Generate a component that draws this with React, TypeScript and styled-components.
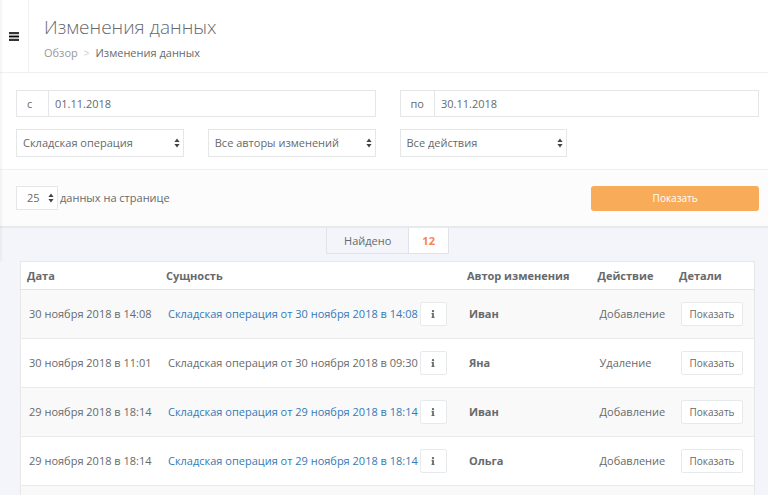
import React from "react";
import styled, { createGlobalStyle } from "styled-components";
import { FaInfo } from "react-icons/fa";

const GlobalStyle = createGlobalStyle`
  *, *::before, *::after { box-sizing: border-box; }
  body {
    margin: 0;
    background: #f3f5fa;
    color: #676a6c;
    font: 11px/16px "Open Sans", "Noto Sans", sans-serif;
  }
  button, input, select { font: inherit; color: inherit; }
`;

const Shell = styled.div`
  height: 100vh;
  overflow: hidden;
`;

const Upper = styled.div`
  position: relative;
  &::before {
    content: "";
    position: absolute;
    inset: 0 auto 0 0;
    width: 3px;
    background: linear-gradient(to right, rgba(0, 0, 0, 0.05), transparent);
    pointer-events: none;
  }
`;

const Header = styled.header`
  display: flex;
  height: 73px;
  background: #fff;
  border-bottom: 1px solid #f0f0f0;
`;

const MenuButton = styled.button`
  display: flex;
  align-items: center;
  justify-content: center;
  width: 29px;
  padding: 0;
  border: 0;
  border-right: 1px solid #f0f0f0;
  background: none;
  color: #000;
`;

const Heading = styled.div`
  padding: 13px 15px 0;
`;

const Title = styled.h1`
  margin: 0;
  font-size: 19px;
  line-height: 28px;
  font-weight: 300;
`;

const Crumbs = styled.nav`
  display: flex;
  gap: 6px;
  margin-top: 4px;
`;

const CrumbLink = styled.a`
  color: #999;
  text-decoration: none;
`;

const CrumbSeparator = styled.span`
  color: #ccc;
  font-size: 10px;
`;

const FilterGrid = styled.div`
  display: grid;
  grid-template-columns: repeat(4, 1fr);
  gap: 12px 24px;
  padding: 17px 9px 12px 16px;
  background: #fff;
`;

const DateField = styled.label`
  grid-column: span 2;
  display: flex;
  height: 27px;
  border: 1px solid #e5e6e7;
`;

const DateLabel = styled.span`
  display: flex;
  align-items: center;
  padding: 0 10px;
  min-width: 32px;
  border-right: 1px solid #e5e6e7;
`;

const DateInput = styled.input`
  flex: 1;
  min-width: 0;
  padding: 0 6px;
  border: 0;
  background: none;
`;

const SelectBox = styled.div<{ $compact?: boolean }>`
  position: relative;
  width: ${(p) => (p.$compact ? "42px" : "100%")};
  height: ${(p) => (p.$compact ? "24px" : "28px")};

  select {
    appearance: none;
    width: 100%;
    height: 100%;
    padding: 0 ${(p) => (p.$compact ? "10px" : "6px")};
    border: 1px solid #e5e6e7;
    border-radius: 0;
    background: #fff;
  }

  svg {
    position: absolute;
    top: calc(50% - 5px);
    right: 4px;
    pointer-events: none;
  }
`;

const ActionBar = styled.div`
  display: flex;
  align-items: center;
  justify-content: space-between;
  height: 59px;
  padding: 0 9px 0 16px;
  background: #fcfcfc;
  border-top: 1px solid #f0f0f0;
  border-bottom: 2px solid #e7eaec;
`;

const PageSize = styled.label`
  display: flex;
  align-items: center;
  gap: 2px;
`;

const SubmitButton = styled.button`
  width: calc((100% - 72px) / 4);
  height: 25px;
  border: 0;
  border-radius: 3px;
  background: #f8ac59;
  color: #fff;
  font-size: 10px;
`;

const Found = styled.div`
  display: flex;
  justify-content: center;
  padding: 0 0 7px 7px;
`;

const FoundPart = styled.span<{ $count?: boolean }>`
  height: 26px;
  padding: 0 ${(p) => (p.$count ? "13px" : "17px")};
  border: 1px solid #dfe4ea;
  border-top: 0;
  border-left-width: ${(p) => (p.$count ? "0" : "1px")};
  background: ${(p) => (p.$count ? "#fff" : "transparent")};
  color: ${(p) => (p.$count ? "#f8864a" : "inherit")};
  font-weight: ${(p) => (p.$count ? 700 : 400)};
  line-height: 26px;
`;

const TableWrap = styled.main`
  padding: 0 13px 0 20px;
`;

const Table = styled.table`
  width: 100%;
  border-collapse: collapse;
  table-layout: fixed;
  background: #fff;
  border: 1px solid #e7e7e7;
`;

const HeadCell = styled.th<{ $width: string }>`
  width: ${(p) => p.$width};
  height: 28px;
  padding: 0 6px;
  border-bottom: 1px solid #e2e3e4;
  text-align: left;
  font-weight: 700;
`;

const Row = styled.tr`
  height: 49px;
  border-bottom: 1px solid #e9eaeb;
  &:nth-child(odd) { background: #f9f9f9; }
`;

const Cell = styled.td<{ $strong?: boolean }>`
  padding: 0 0 0 8px;
  white-space: nowrap;
  font-weight: ${(p) => (p.$strong ? 700 : 400)};
`;

const Entity = styled.div`
  display: flex;
  align-items: center;
  gap: 2px;
`;

const EntityLink = styled.a`
  color: #337ab7;
  text-decoration: none;
`;

const SmallButton = styled.button<{ $icon?: boolean }>`
  display: flex;
  align-items: center;
  justify-content: center;
  width: ${(p) => (p.$icon ? "27px" : "62px")};
  height: 24px;
  padding: 0;
  border: 1px solid #e7eaec;
  border-radius: 2px;
  background: #fff;
  font-size: 10px;
`;

const Arrows = () => (
  <svg width="6" height="10" viewBox="0 0 6 10" fill="#444" aria-hidden="true">
    <path d="M3 0.5L5.6 4H0.4zM0.4 6H5.6L3 9.5z" />
  </svg>
);

const MenuIcon = () => (
  <svg width="10" height="9" viewBox="0 0 10 9" aria-hidden="true">
    <path d="M0 0H10V9H0z" fill="#ccc" />
    <path d="M0 0.2H10V1.8H0zM0 3.7H10V5.3H0zM0 7.2H10V8.8H0z" fill="#000" />
  </svg>
);

type SelectProps = { label?: string; option: string; compact?: boolean };

const Select = ({ label, option, compact }: SelectProps) => (
  <SelectBox $compact={compact}>
    <select aria-label={label}>
      <option>{option}</option>
    </select>
    <Arrows />
  </SelectBox>
);

const columns = [
  { title: "Дата", width: "19%" },
  { title: "Сущность", width: "41%" },
  { title: "Автор изменения", width: "17.8%" },
  { title: "Действие", width: "11.1%" },
  { title: "Детали", width: "11.1%" },
];

const rows = [
  { date: "30 ноября 2018 в 14:08", entity: "Складская операция от 30 ноября 2018 в 14:08", author: "Иван", action: "Добавление" },
  { date: "30 ноября 2018 в 11:01", entity: "Складская операция от 30 ноября 2018 в 09:30", author: "Яна", action: "Удаление", removed: true },
  { date: "29 ноября 2018 в 18:14", entity: "Складская операция от 29 ноября 2018 в 18:14", author: "Иван", action: "Добавление" },
  { date: "29 ноября 2018 в 18:14", entity: "Складская операция от 29 ноября 2018 в 18:14", author: "Ольга", action: "Добавление" },
];

export default function App() {
  return (
    <Shell>
      <GlobalStyle />
      <Upper>
        <Header>
          <MenuButton aria-label="Меню"><MenuIcon /></MenuButton>
          <Heading>
            <Title>Изменения данных</Title>
            <Crumbs>
              <CrumbLink href="#">Обзор</CrumbLink>
              <CrumbSeparator>&gt;</CrumbSeparator>
              <span>Изменения данных</span>
            </Crumbs>
          </Heading>
        </Header>
        <FilterGrid>
          <DateField>
            <DateLabel>с</DateLabel>
            <DateInput defaultValue="01.11.2018" />
          </DateField>
          <DateField>
            <DateLabel>по</DateLabel>
            <DateInput defaultValue="30.11.2018" />
          </DateField>
          <Select label="Сущность" option="Складская операция" />
          <Select label="Автор" option="Все авторы изменений" />
          <Select label="Действие" option="Все действия" />
        </FilterGrid>
        <ActionBar>
          <PageSize>
            <Select option="25" compact />
            данных на странице
          </PageSize>
          <SubmitButton>Показать</SubmitButton>
        </ActionBar>
        <Found>
          <FoundPart>Найдено</FoundPart>
          <FoundPart $count>12</FoundPart>
        </Found>
      </Upper>
      <TableWrap>
        <Table>
          <thead>
            <tr>
              {columns.map((c) => (
                <HeadCell key={c.title} $width={c.width}>{c.title}</HeadCell>
              ))}
            </tr>
          </thead>
          <tbody>
            {rows.map((r, i) => (
              <Row key={i}>
                <Cell>{r.date}</Cell>
                <Cell>
                  <Entity>
                    {r.removed ? <span>{r.entity}</span> : <EntityLink href="#">{r.entity}</EntityLink>}
                    <SmallButton $icon aria-label="Информация"><FaInfo size={8} /></SmallButton>
                  </Entity>
                </Cell>
                <Cell $strong>{r.author}</Cell>
                <Cell>{r.action}</Cell>
                <Cell><SmallButton>Показать</SmallButton></Cell>
              </Row>
            ))}
            <Row><Cell colSpan={5} /></Row>
          </tbody>
        </Table>
      </TableWrap>
    </Shell>
  );
}
